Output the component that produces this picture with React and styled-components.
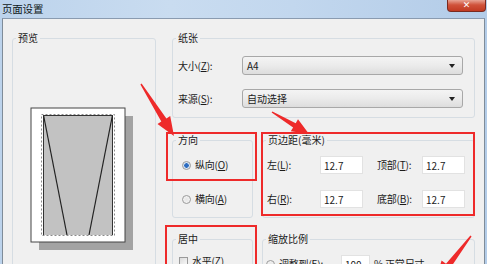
import React from "react";
import styled, { createGlobalStyle } from "styled-components";

const GlobalStyle = createGlobalStyle`
  html, body {
    margin: 0;
    padding: 0;
    background: #b9d1ea;
  }
  body {
    font-family: "Noto Sans CJK SC", "Noto Sans", sans-serif;
    font-size: 10px;
    color: #1b1b1b;
  }
`;

const Window = styled.div`
  position: relative;
  width: 487px;
  height: 264px;
  overflow: hidden;
  display: flex;
  flex-direction: column;
  background: linear-gradient(90deg, #bcd3ec 0%, #c9dcf0 35%, #c2d7ee 60%, #b3cce8 100%);
`;

const TitleBar = styled.div`
  height: 18px;
  display: flex;
  align-items: flex-start;
  padding-left: 2px;
  flex-shrink: 0;
`;

const Title = styled.div`
  margin-top: 3px;
  font-size: 10.5px;
  line-height: 12px;
  color: #101820;
  letter-spacing: -0.2px;
`;

const CloseButton = styled.div`
  margin-left: auto;
  margin-right: 1px;
  width: 37px;
  height: 11px;
  border: 1px solid #7a2a20;
  border-top: none;
  border-radius: 0 0 4px 4px;
  background: linear-gradient(180deg, #e8a494 0%, #d0523a 45%, #c13a22 100%);
  color: #fff;
  display: flex;
  align-items: center;
  justify-content: center;
  font-family: "DejaVu Sans", sans-serif;
  font-weight: bold;
  font-size: 9px;
  line-height: 9px;
`;

const Frame = styled.div`
  flex: 1;
  margin: 0 2px 0 2px;
  border-left: 1px solid #7f8c99;
  border-right: 1px solid #7f8c99;
  border-top: 1px solid #8a9bb0;
  background: #f0f0f0;
  display: grid;
  grid-template-columns: 144px 303px;
  column-gap: 16px;
  padding: 12px 0 0 9px;
  align-items: start;
`;

const Group = styled.fieldset`
  margin: 0;
  padding: 0;
  border: 1px solid #d6dde3;
  border-radius: 3px;
  min-width: 0;
`;

const Legend = styled.legend`
  padding: 0 2px;
  margin-left: 3px;
  font-size: 10px;
  line-height: 14px;
  color: #1b1b1b;
`;

const Body = styled.div`
  padding: ${(p) => p.$pad};
`;

const PreviewGroup = styled(Group)`
  height: 260px;
`;

const PreviewArt = styled.svg`
  display: block;
  margin: 62px 0 0 17px;
`;

const RightColumn = styled.div`
  display: flex;
  flex-direction: column;
`;

const FieldRows = styled.div`
  display: grid;
  grid-template-columns: 64px 221px;
  row-gap: 14px;
  align-items: center;
`;

const Label = styled.span`
  font-size: 10px;
  line-height: 12px;
  white-space: nowrap;
  letter-spacing: -0.2px;
  width: ${(p) => (p.$w ? `${p.$w}px` : "auto")};
  u {
    text-decoration: underline;
  }
`;

const Combo = styled.div`
  height: 19px;
  box-sizing: border-box;
  border: 1px solid #a8a8a8;
  border-radius: 3px;
  background: linear-gradient(180deg, #f4f4f4 0%, #ebebeb 50%, #dddddd 100%);
  display: flex;
  align-items: center;
  padding: 0 7px 0 4px;
  font-size: 10px;
  &::after {
    content: "";
    margin-left: auto;
    border-left: 3px solid transparent;
    border-right: 3px solid transparent;
    border-top: 4px solid #222;
  }
`;

const SplitRow = styled.div`
  display: grid;
  grid-template-columns: 81px 213px;
  column-gap: 9px;
  margin-top: ${(p) => p.$top}px;
`;

const StackRows = styled.div`
  display: grid;
  grid-auto-rows: 18px;
  row-gap: 16px;
  align-items: center;
`;

const MarginGrid = styled.div`
  display: grid;
  grid-template-columns: 53px 43px 14px 45px 43px;
  grid-auto-rows: 18px;
  row-gap: 16px;
  align-items: center;
`;

const NumberBox = styled.div`
  height: 18px;
  box-sizing: border-box;
  border: 1px solid #e2e2e2;
  background: #fff;
  display: flex;
  align-items: center;
  padding-left: 3px;
  font-size: 10px;
  color: #222;
  width: ${(p) => p.$w || 43}px;
`;

const Option = styled.div`
  display: flex;
  align-items: center;
  gap: 4px;
`;

const Radio = styled.span`
  width: 9px;
  height: 9px;
  box-sizing: border-box;
  border-radius: 50%;
  border: 1px solid #9a9a9a;
  background: ${(p) =>
    p.$on
      ? "radial-gradient(circle, #2d6cc0 0 2px, #cfe0f3 2.5px, #f4f4f4 100%)"
      : "radial-gradient(circle, #e6e6e6 0%, #f7f7f7 100%)"};
`;

const Check = styled.span`
  width: 9px;
  height: 9px;
  box-sizing: border-box;
  border: 1px solid #9a9a9a;
  background: linear-gradient(135deg, #dcdcdc, #f8f8f8);
`;

const ScaleRow = styled.div`
  display: flex;
  align-items: center;
  gap: 4px;
`;

const Overlay = styled.svg`
  position: absolute;
  left: 0;
  top: 0;
  pointer-events: none;
`;

function arrow(tail, tip, headLen, headW, neckW, tailW) {
  const dx = tip[0] - tail[0];
  const dy = tip[1] - tail[1];
  const len = Math.hypot(dx, dy);
  const ux = dx / len;
  const uy = dy / len;
  const nx = -uy;
  const ny = ux;
  const neck = [tip[0] - ux * headLen, tip[1] - uy * headLen];
  const pts = [
    [tail[0] + (nx * tailW) / 2, tail[1] + (ny * tailW) / 2],
    [neck[0] + (nx * neckW) / 2, neck[1] + (ny * neckW) / 2],
    [neck[0] + (nx * headW) / 2, neck[1] + (ny * headW) / 2],
    tip,
    [neck[0] - (nx * headW) / 2, neck[1] - (ny * headW) / 2],
    [neck[0] - (nx * neckW) / 2, neck[1] - (ny * neckW) / 2],
    [tail[0] - (nx * tailW) / 2, tail[1] - (ny * tailW) / 2],
  ];
  return pts.map((p) => p.map((v) => v.toFixed(1)).join(",")).join(" ");
}

const RED = "#ee2a2a";

const PagePreview = () => (
  <PreviewArt width="104" height="144" viewBox="0 0 104 144">
    <rect x="9" y="9" width="94" height="134" fill="#a3a3a3" />
    <rect x="1" y="1" width="94" height="134" fill="#fff" stroke="#444" strokeWidth="1" />
    <rect x="13" y="8" width="70" height="120" fill="#c2c2c2" />
    <rect
      x="11.5"
      y="7.5"
      width="73"
      height="121"
      fill="none"
      stroke="#8a8a8a"
      strokeWidth="1"
      strokeDasharray="2 2"
    />
    <line x1="13.5" y1="8" x2="13.5" y2="128" stroke="#333" strokeWidth="1" />
    <line x1="82.5" y1="8" x2="82.5" y2="128" stroke="#333" strokeWidth="1" />
    <line x1="13.5" y1="8" x2="37" y2="128" stroke="#222" strokeWidth="1.2" />
    <line x1="82.5" y1="8" x2="59" y2="128" stroke="#222" strokeWidth="1.2" />
    <line x1="13" y1="8.5" x2="83" y2="8.5" stroke="#333" strokeWidth="1" />
  </PreviewArt>
);

const App = () => {
  return (
    <>
      <GlobalStyle />
      <Window>
        <TitleBar>
          <Title>页面设置</Title>
          <CloseButton>✕</CloseButton>
        </TitleBar>
        <Frame>
          <PreviewGroup>
            <Legend>预览</Legend>
            <PagePreview />
          </PreviewGroup>

          <RightColumn>
            <Group>
              <Legend>纸张</Legend>
              <Body $pad="11px 11px 9px 5px">
                <FieldRows>
                  <Label>
                    大小(<u>Z</u>):
                  </Label>
                  <Combo>A4</Combo>
                  <Label>
                    来源(<u>S</u>):
                  </Label>
                  <Combo>自动选择</Combo>
                </FieldRows>
              </Body>
            </Group>

            <SplitRow $top={15}>
              <Group>
                <Legend>方向</Legend>
                <Body $pad="9px 0 9px 9px">
                  <StackRows>
                    <Option>
                      <Radio $on />
                      <Label>
                        纵向(<u>O</u>)
                      </Label>
                    </Option>
                    <Option>
                      <Radio />
                      <Label>
                        横向(<u>A</u>)
                      </Label>
                    </Option>
                  </StackRows>
                </Body>
              </Group>
              <Group>
                <Legend>页边距(毫米)</Legend>
                <Body $pad="9px 0 9px 4px">
                  <MarginGrid>
                    <Label>
                      左(<u>L</u>):
                    </Label>
                    <NumberBox>12.7</NumberBox>
                    <span />
                    <Label>
                      顶部(<u>T</u>):
                    </Label>
                    <NumberBox>12.7</NumberBox>
                    <Label>
                      右(<u>R</u>):
                    </Label>
                    <NumberBox>12.7</NumberBox>
                    <span />
                    <Label>
                      底部(<u>B</u>):
                    </Label>
                    <NumberBox>12.7</NumberBox>
                  </MarginGrid>
                </Body>
              </Group>
            </SplitRow>

            <SplitRow $top={14}>
              <Group>
                <Legend>居中</Legend>
                <Body $pad="9px 0 9px 6px">
                  <Option>
                    <Check />
                    <Label>
                      水平(<u>Z</u>)
                    </Label>
                  </Option>
                </Body>
              </Group>
              <Group>
                <Legend>缩放比例</Legend>
                <Body $pad="9px 0 9px 3px">
                  <ScaleRow>
                    <Radio />
                    <Label $w={58}>
                      调整到(<u>E</u>):
                    </Label>
                    <NumberBox $w={29}>100</NumberBox>
                    <Label>% 正常尺寸</Label>
                  </ScaleRow>
                </Body>
              </Group>
            </SplitRow>
          </RightColumn>
        </Frame>

        <Overlay width="487" height="264" viewBox="0 0 487 264">
          <g fill="none" stroke={RED} strokeWidth="2">
            <rect x="167" y="133" width="89" height="47" />
            <rect x="262" y="133" width="212" height="82" />
            <rect x="166" y="226" width="90" height="60" />
          </g>
          <g fill={RED}>
            <polygon points={arrow([141, 84], [174, 136], 19, 15, 6, 1.5)} />
            <polygon points={arrow([272, 112], [309, 134], 17, 14, 5, 1.5)} />
            <polygon points={arrow([471, 236], [435, 283], 22, 17, 6, 1.5)} />
          </g>
        </Overlay>
      </Window>
    </>
  );
};

export default App;
